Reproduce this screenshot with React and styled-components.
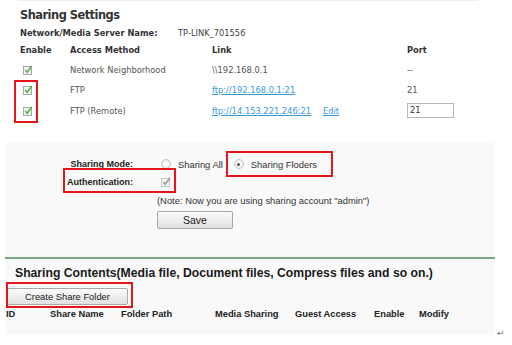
import React from 'react';
import styled, { createGlobalStyle } from 'styled-components';

const GlobalStyle = createGlobalStyle`
  html, body {
    margin: 0;
    padding: 0;
    background: #ffffff;
  }
`;

const Page = styled.div`
  position: relative;
  width: 512px;
  height: 345px;
  overflow: hidden;
  background: #ffffff;
`;

const TopPanel = styled.div`
  position: relative;
  width: 460px;
  margin-left: 18px;
  padding: 7px 0 0 2px;
  border-top: 1px solid #f0f0f0;
  font-family: 'DejaVu Sans', Verdana, sans-serif;
  height: 122px;
  box-sizing: border-box;
`;

const Title = styled.div`
  font-size: 11.4px;
  letter-spacing: -0.5px;
  font-weight: bold;
  color: #333;
  line-height: 15px;
`;

const ServerRow = styled.div`
  display: flex;
  margin-top: 4px;
  font-size: 8.3px;
  line-height: 12px;
  color: #333;
`;

const ServerLabel = styled.div`
  width: 158px;
  font-weight: bold;
`;

const ServerValue = styled.div`
  color: #444;
`;

const Grid = styled.div`
  display: grid;
  grid-template-columns: 50px 142px 195px auto;
  grid-template-rows: 19px 21px 20px 21px;
  align-items: center;
  margin-top: 1px;
  font-size: 8.3px;
  color: #555;
`;

const Head = styled.div`
  font-weight: bold;
  color: #333;
`;

const Cell = styled.div`
  display: flex;
  align-items: center;
  gap: 12px;
  padding-left: ${p => (p.$indent ? '3px' : '0')};
`;

const Link = styled.span`
  color: #3a9ad9;
  text-decoration: underline;
`;

const PortInput = styled.div`
  width: 41px;
  height: 11px;
  border: 1px solid #b8b8b8;
  padding: 1px 2px;
  font-size: 8.3px;
  line-height: 11px;
  color: #333;
  background: #fff;
`;

const Highlight = styled.div`
  position: absolute;
  border: 2px solid #e4151b;
  box-sizing: border-box;
  left: ${p => p.$x}px;
  top: ${p => p.$y}px;
  width: ${p => p.$w}px;
  height: ${p => p.$h}px;
`;

const GreyPanel = styled.div`
  position: relative;
  margin: 21px 0 0 5px;
  width: 490px;
  height: 192px;
  background: #f9f9f9;
  font-family: 'Liberation Sans', Arial, sans-serif;
  color: #222;
`;

const Form = styled.div`
  display: grid;
  grid-template-columns: 128px auto;
  column-gap: 24px;
  padding-top: 12px;
`;

const Label = styled.div`
  font-size: 9px;
  font-weight: bold;
  text-align: right;
  line-height: 18px;
  color: #222;
`;

const Value = styled.div`
  display: flex;
  align-items: center;
  height: 18px;
  padding-left: 4px;
  font-size: 9.4px;
  color: #333;
`;

const Radio = styled.span`
  display: inline-block;
  width: 8px;
  height: 8px;
  border-radius: 50%;
  border: 1px solid #c4c4c4;
  background: radial-gradient(circle, #fff 0%, #e8e8e8 100%);
  margin-right: 7px;
  position: relative;
  &:after {
    content: '';
    display: ${p => (p.$on ? 'block' : 'none')};
    position: absolute;
    left: 2.5px;
    top: 2.5px;
    width: 3px;
    height: 3px;
    border-radius: 50%;
    background: #555;
  }
`;

const RadioLabel = styled.span`
  margin-right: ${p => p.$gap || 0}px;
`;

const Note = styled.div`
  grid-column: 2;
  margin-top: 4px;
  font-size: 9.4px;
  line-height: 12px;
  color: #333;
`;

const Button = styled.div`
  display: flex;
  align-items: center;
  justify-content: center;
  box-sizing: border-box;
  width: ${p => p.$w}px;
  height: ${p => p.$h}px;
  border: 1px solid #a9a9a9;
  border-radius: 2px;
  background: linear-gradient(#fbfbfb, #e1e1e1);
  font-family: 'Liberation Sans', Arial, sans-serif;
  font-size: ${p => p.$fs}px;
  color: #222;
`;

const SaveWrap = styled.div`
  grid-column: 2;
  margin-top: 4px;
`;

const Divider = styled.div`
  margin-top: 28px;
  height: 2px;
  background: #7aa68a;
`;

const SectionTitle = styled.div`
  margin: 6px 0 0 10px;
  font-size: 12.2px;
  font-weight: bold;
  line-height: 16px;
  color: #1a1a1a;
`;

const ButtonRow = styled.div`
  margin: 7px 0 0 2px;
`;

const Columns = styled.div`
  display: grid;
  grid-template-columns: 44px 71px 94px 80px 79px 45px auto;
  margin-top: 3px;
  padding-left: 1px;
  font-size: 9.3px;
  font-weight: bold;
  line-height: 13px;
  color: #222;
`;

const Return = styled.div`
  position: absolute;
  left: 497px;
  top: 328px;
  font-family: 'DejaVu Sans', sans-serif;
  font-size: 9px;
  color: #777;
`;

const Check = ({ color = '#4fb83a', box = '#a8a8a8' }) => (
  <svg width="10" height="10" viewBox="0 0 10 10">
    <rect x="0.5" y="1.5" width="8" height="8" fill="#f4f4f4" stroke={box} />
    <path d="M2.2 5 L4.2 7.2 L8.8 1" fill="none" stroke={color} strokeWidth="1.6" />
  </svg>
);

const rows = [
  { name: 'Network Neighborhood', link: '\\\\192.168.0.1', port: '--' },
  { name: 'FTP', link: 'ftp://192.168.0.1:21', href: true, port: '21' },
  { name: 'FTP (Remote)', link: 'ftp://14.153.221.246:21', href: true, edit: true, input: '21' },
];

const headers = ['ID', 'Share Name', 'Folder Path', 'Media Sharing', 'Guest Access', 'Enable', 'Modify'];

export default function App() {
  return (
    <Page>
      <GlobalStyle />
      <TopPanel>
        <Title>Sharing Settings</Title>
        <ServerRow>
          <ServerLabel>Network/Media Server Name:</ServerLabel>
          <ServerValue>TP-LINK_701556</ServerValue>
        </ServerRow>
        <Grid>
          <Head>Enable</Head>
          <Head>Access Method</Head>
          <Head>Link</Head>
          <Head>Port</Head>
          {rows.map(r => (
            <React.Fragment key={r.name}>
              <Cell $indent><Check /></Cell>
              <Cell>{r.name}</Cell>
              <Cell>
                {r.href ? <Link>{r.link}</Link> : <span>{r.link}</span>}
                {r.edit && <Link>Edit</Link>}
              </Cell>
              <Cell>{r.input ? <PortInput>{r.input}</PortInput> : r.port}</Cell>
            </React.Fragment>
          ))}
        </Grid>
      </TopPanel>

      <GreyPanel>
        <Form>
          <Label>Sharing Mode:</Label>
          <Value>
            <Radio />
            <RadioLabel $gap={11}>Sharing All</RadioLabel>
            <Radio $on />
            <RadioLabel>Sharing Floders</RadioLabel>
          </Value>
          <Label>Authentication:</Label>
          <Value>
            <Check color="#9a9a9a" box="#c8c8c8" />
          </Value>
          <Note>(Note: Now you are using sharing account "admin")</Note>
          <SaveWrap>
            <Button $w={76} $h={18} $fs={10.5}>Save</Button>
          </SaveWrap>
        </Form>
        <Divider />
        <SectionTitle>Sharing Contents(Media file, Document files, Compress files and so on.)</SectionTitle>
        <ButtonRow>
          <Button $w={121} $h={17} $fs={9.4}>Create Share Folder</Button>
        </ButtonRow>
        <Columns>
          {headers.map(h => <div key={h}>{h}</div>)}
        </Columns>
      </GreyPanel>

      <Highlight $x={14} $y={80} $w={24} $h={43} />
      <Highlight $x={226} $y={151} $w={107} $h={26} />
      <Highlight $x={63} $y={168} $w={113} $h={25} />
      <Highlight $x={6} $y={282} $w={127} $h={26} />
      <Return>↵</Return>
    </Page>
  );
}
